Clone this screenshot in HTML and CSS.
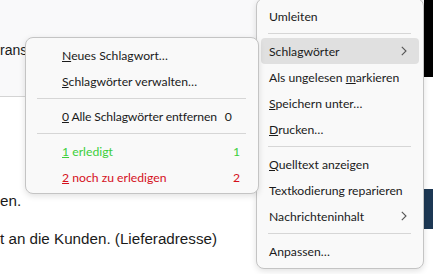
FILE: index.html
```html
<!DOCTYPE html>
<html lang="de">
  <head>
    <meta charset="utf-8" />
    <link rel="stylesheet" href="styles.css">
    <title>Kontextmenü</title>
  </head>

  <body>
    <div class="page">
      <div class="content">
        <div class="header">
          <span class="header-text">ransport</span>
        </div>
        <div class="message">
          <p>en.</p>
          <p>t an die Kunden. (Lieferadresse)</p>
        </div>
      </div>
      <div class="side">
        <div class="side-top"></div>
        <div class="side-band"></div>
      </div>
    </div>

    <div class="menu main-menu">
      <div class="item"><span>Umleiten</span></div>
      <div class="sep"></div>
      <div class="item active"><span>Schlagwörter</span>
        <svg class="chevron" width="6" height="10" viewBox="0 0 6 10"><path d="M0.8 0.8 L5 5 L0.8 9.2" /></svg>
      </div>
      <div class="item"><span>Als ungelesen <u>m</u>arkieren</span></div>
      <div class="item"><span><u>S</u>peichern unter…</span></div>
      <div class="item"><span><u>D</u>rucken…</span></div>
      <div class="sep"></div>
      <div class="item"><span><u>Q</u>uelltext anzeigen</span></div>
      <div class="item"><span>Textkodierung reparieren</span></div>
      <div class="item"><span>Nachrichteninhalt</span>
        <svg class="chevron" width="6" height="10" viewBox="0 0 6 10"><path d="M0.8 0.8 L5 5 L0.8 9.2" /></svg>
      </div>
      <div class="sep"></div>
      <div class="item"><span>Anpassen…</span></div>
    </div>

    <div class="menu sub-menu">
      <div class="item"><span><u>N</u>eues Schlagwort…</span></div>
      <div class="item"><span><u>S</u>chlagwörter verwalten…</span></div>
      <div class="sep"></div>
      <div class="item"><span class="label-tight"><u>0</u> Alle Schlagwörter entfernen</span><span class="key key-wide">0</span></div>
      <div class="sep"></div>
      <div class="item tag-done"><span><u>1</u> erledigt</span><span class="key">1</span></div>
      <div class="item tag-todo"><span><u>2</u> noch zu erledigen</span><span class="key">2</span></div>
    </div>
  </body>
</html>
```

FILE: styles.css
```css
html,
body {
  margin: 0;
  height: 100%;
  overflow: hidden;
}

body {
  background: #fff;
  font-family: "Liberation Sans", Arial, sans-serif;
  color: #1a1a1a;
  position: relative;
}

.page {
  display: grid;
  grid-template-columns: 1fr 9px;
  height: 274px;
}

.content {
  overflow: hidden;
}

.header {
  height: 97px;
  background: #f9f9fa;
  border-bottom: 1px solid #d4d4d4;
  box-sizing: border-box;
  padding-top: 41px;
  font-size: 14px;
  line-height: 18px;
  white-space: nowrap;
}

.message {
  padding-top: 94px;
  font-size: 15.2px;
  line-height: 20px;
}

.message p {
  margin: 0 0 18px;
  white-space: nowrap;
}

.side {
  display: flex;
  flex-direction: column;
}

.side-top {
  height: 77px;
  background: #000;
}

.side-band {
  height: 40px;
  margin-top: 112px;
  background: #1d3854;
}

/* menus */

.menu {
  position: absolute;
  background: #f9f9f9;
  border: 1px solid #c4c4c4;
  border-radius: 8px;
  box-shadow: 0 2px 6px rgba(0, 0, 0, 0.12);
  font-family: Lato, "Noto Sans", sans-serif;
  font-size: 12.2px;
  color: #1b1b1b;
  box-sizing: border-box;
}

.item {
  height: 26px;
  display: flex;
  align-items: center;
  white-space: nowrap;
}

.sep {
  height: 1px;
  background: #d6d6d6;
  margin: 4px 8px 4px 7px;
}

.main-menu {
  left: 256px;
  top: -2px;
  width: 168px;
  padding: 4px 4px;
}

.main-menu .item {
  padding-left: 8px;
  padding-right: 12px;
  border-radius: 4px;
}

.main-menu .item.active {
  background: #e0e0e0;
}

.chevron {
  margin-left: auto;
  fill: none;
  stroke: #555;
  stroke-width: 1.1;
}

.sub-menu {
  left: 25px;
  top: 37px;
  width: 234px;
  padding: 4px 4px 3px;
  z-index: 2;
}

.sub-menu .item {
  padding-left: 32px;
  padding-right: 14px;
}

.sub-menu .key {
  margin-left: auto;
}

.label-tight {
  letter-spacing: -0.15px;
}

.sub-menu .key-wide {
  margin-left: 8px;
}

.tag-done {
  color: #3ccf3c;
}

.tag-todo {
  color: #d5101c;
}
```
